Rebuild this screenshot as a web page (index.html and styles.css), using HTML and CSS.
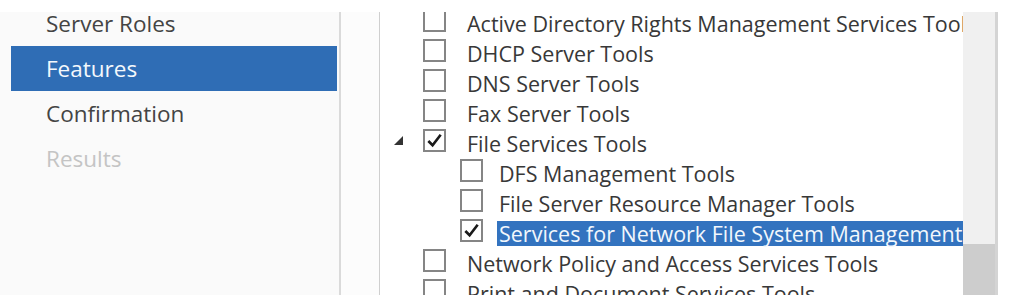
FILE: index.html
```html
<!DOCTYPE html>
<html>
<head>
<meta charset="utf-8">
<link rel="stylesheet" href="styles.css">
</head>
<body>
<div class="window">
  <div class="sidebar">
    <ul class="nav">
      <li class="nav-item">Server Roles</li>
      <li class="nav-item active">Features</li>
      <li class="nav-item">Confirmation</li>
      <li class="nav-item disabled">Results</li>
    </ul>
  </div>
  <div class="gutter"></div>
  <div class="listbox">
    <div class="tree">
      <div class="row"><span class="cb"></span><span class="label">Active Directory Rights Management Services Tools</span></div>
      <div class="row"><span class="cb"></span><span class="label">DHCP Server Tools</span></div>
      <div class="row"><span class="cb"></span><span class="label">DNS Server Tools</span></div>
      <div class="row"><span class="cb"></span><span class="label">Fax Server Tools</span></div>
      <div class="row"><span class="expander"></span><span class="cb checked"><svg viewBox="0 0 20 20" width="19" height="19"><path d="M3.5 10.5 L8 15 L16.5 4" fill="none" stroke="#1a1a1a" stroke-width="2.8"/></svg></span><span class="label">File Services Tools</span></div>
      <div class="row sub"><span class="cb"></span><span class="label">DFS Management Tools</span></div>
      <div class="row sub"><span class="cb"></span><span class="label">File Server Resource Manager Tools</span></div>
      <div class="row sub"><span class="cb checked"><svg viewBox="0 0 20 20" width="19" height="19"><path d="M3.5 10.5 L8 15 L16.5 4" fill="none" stroke="#1a1a1a" stroke-width="2.8"/></svg></span><span class="label selected">Services for Network File System Management Tools</span></div>
      <div class="row"><span class="cb"></span><span class="label">Network Policy and Access Services Tools</span></div>
      <div class="row"><span class="cb"></span><span class="label">Print and Document Services Tools</span></div>
    </div>
    <div class="scrollbar"><div class="thumb"></div></div>
  </div>
</div>
</body>
</html>
```
FILE: styles.css
```css
* { box-sizing: border-box; }
html, body { margin: 0; padding: 0; background: #ffffff; }
body {
  font-family: "Open Sans", "Noto Sans", sans-serif;
  width: 1010px;
  height: 304px;
  overflow: hidden;
}
.window {
  margin-top: 12px;
  height: 283px;
  width: 998px;
  display: flex;
  overflow: hidden;
}
.sidebar {
  width: 341px;
  flex: none;
  background: #fafafa;
  border-right: 2px solid #dadada;
  overflow: hidden;
}
.nav {
  list-style: none;
  margin: -11px 0 0 11px;
  padding: 0;
  width: 326px;
}
.nav-item {
  height: 45px;
  line-height: 45px;
  padding-left: 35px;
  font-size: 22.5px;
  color: #444444;
}
.nav-item.active {
  background: #2f6db5;
  color: #f4f8fc;
}
.nav-item.disabled { color: #c4c4c4; }
.gutter {
  width: 39px;
  flex: none;
  background: #fcfcfc;
  border-right: 1px solid #cfcfcf;
}
.listbox {
  flex: 1;
  display: flex;
  background: #ffffff;
  border-right: 3px solid #d4d4d4;
  overflow: hidden;
}
.tree {
  flex: 1;
  min-width: 0;
  margin-top: -7px;
  overflow: hidden;
}
.row {
  height: 30px;
  display: flex;
  align-items: center;
  padding-left: 43px;
  position: relative;
  white-space: nowrap;
}
.row.sub { padding-left: 80px; }
.expander {
  position: absolute;
  left: 14px;
  top: 11px;
  width: 0;
  height: 0;
  border-left: 9px solid transparent;
  border-bottom: 9px solid #333333;
}
.cb {
  width: 23px;
  height: 23px;
  flex: none;
  border: 2px solid #858585;
  background: #ffffff;
  display: flex;
  align-items: center;
  justify-content: center;
}
.label {
  margin-left: 19px;
  font-size: 21.5px;
  line-height: 25px;
  color: #383838;
  margin-top: 6px;
  padding-left: 2px;
}
.row.sub .label { margin-left: 14px; }
.label.selected {
  background: #3373bf;
  color: #f2f7fc;
  flex: 1;
}
.scrollbar {
  width: 32px;
  flex: none;
  background: #f0f0f0;
  display: flex;
  flex-direction: column;
  justify-content: flex-end;
}
.thumb {
  height: 51px;
  background: #cdcdcd;
}
```
